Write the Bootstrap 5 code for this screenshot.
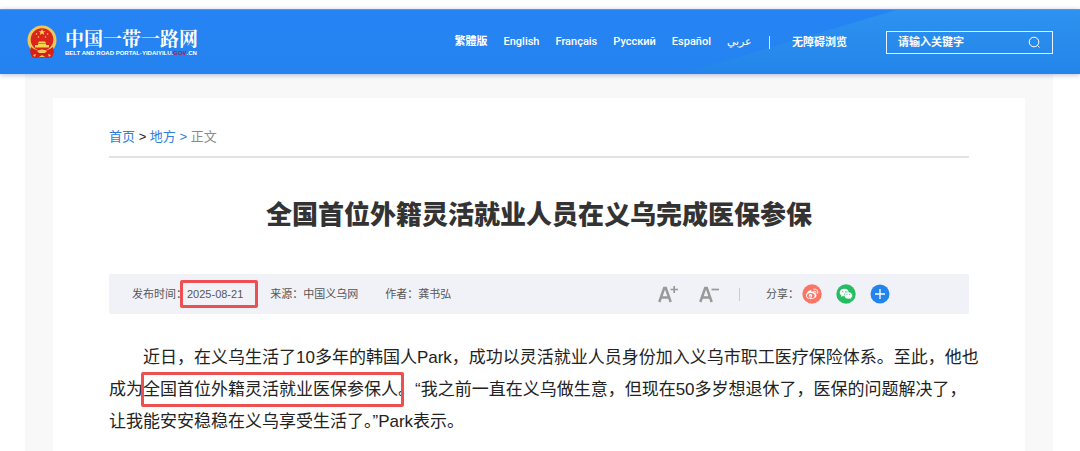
<!DOCTYPE html>
<html lang="zh-CN">
<head>
<meta charset="utf-8">
<meta name="viewport" content="width=device-width, initial-scale=1">
<title>全国首位外籍灵活就业人员在义乌完成医保参保</title>
<link href="https://cdn.jsdelivr.net/npm/bootstrap@5.3.0/dist/css/bootstrap.min.css" rel="stylesheet">
<style>
body{font-family:"Liberation Sans","Noto Sans CJK SC",sans-serif;background:#fff;color:#222}
a{text-decoration:none}
.site-head{margin-top:9px;height:65px;padding:0 27px;position:relative;z-index:1;border-top:1px solid #5f96d2;background:linear-gradient(#2583f4,#2583f0);box-shadow:0 1px 5px rgba(40,70,150,.35)}
.sheen{position:absolute;inset:0 0 0 auto;width:400px;height:100%;z-index:-1}
.brand-cn{font-family:"Noto Serif CJK SC","Noto Sans CJK SC",serif;font-size:19px;font-weight:700;line-height:22px}
.brand-en{font-size:6px;font-weight:700;line-height:8px;white-space:nowrap}
.brand-en b{color:#b3174f}
.langs{gap:16px;font-family:Roboto,"Noto Sans CJK TC",sans-serif;font-size:11px;font-weight:500;line-height:16px}
.langs a,.barrier{color:#fff;white-space:nowrap}
.barrier{font-size:11px;font-weight:700;line-height:16px}
.rule{width:1px;height:13px;background:#d6e9ff;margin:0 22px 0 17px}
.find{width:167px;height:23px;border:1px solid #e6f2ff;margin-left:39px;padding:0 11px}
.find input{font-size:11px;font-weight:700;line-height:16px;color:#fff;background:none;border:0;outline:0;padding:0;min-width:0}
.find input::placeholder{color:#fff;opacity:1}
.find button{background:none;border:0;padding:0;line-height:0}
.page-bg{background:#f8f8f8;margin:0 27px 0 25px;padding:24px 28px 0}
.article{background:#fff;padding:26px 56px 13px}
.crumbs{font-size:13px;line-height:26px;padding-bottom:6px;border-bottom:2px solid #e2e2e2;color:#222}
.crumbs a{color:#2f7de1}.crumbs .here{color:#8b8b8b}
h1{font-size:26px;font-weight:900;line-height:36px;color:#333;margin:39px 0 41px}
.meta-bar{background:#f1f2f8;min-height:40px;padding:0 79px 0 23px;font-size:11px;line-height:16px;color:#555;border-radius:2px}
.facts{gap:27px}
.tools button{background:none;border:0;padding:0;line-height:0}
.sizes{gap:21px}
.tick{width:1px;height:13px;background:#ccc;margin:0 26px 0 20px}
.share{gap:14px;margin-left:3px}
.story{font-size:17px;line-height:32px;text-indent:2em;margin:28px -12px 0 0;color:#222}
.boxed{position:relative}
.boxed::after{content:"";position:absolute;border:3px solid #ed5050;border-radius:2px}
.box-date::after{inset:-8px -15px -8px -7px}
.box-text::after{inset:-8px -6px -8px -2px}
</style>
</head>
<body>
<header class="site-head d-flex align-items-center">
  <svg class="sheen" viewBox="0 0 400 64" preserveAspectRatio="none" aria-hidden="true"><defs><linearGradient id="sh" x2="0" y2="1"><stop stop-color="#2d92f0"/><stop offset="1" stop-color="#2385e9"/></linearGradient></defs><path d="M216 0H400V64H0Q55 48 216 0" fill="url(#sh)"/></svg>
  <a href="#" class="d-flex align-items-center text-white">
    <svg width="30" height="34" viewBox="0 0 30 34" aria-hidden="true">
      <path d="M4 23h22l-1 9-5 1-5-2-5 2-5-1z" fill="#d81e18"/>
      <circle cx="15" cy="15" r="14.5" fill="#f1c65a"/><circle cx="15" cy="14.500" r="11.300" fill="#d9251c"/>
      <path d="M15 4l1 2.200h2.300l-1.800 1.500.7 2.300-2.200-1.400L12.800 10l.7-2.300-1.800-1.500H14z" fill="#f8d54e"/>
      <g fill="#f8d54e"><circle cx="9.500" cy="9" r=".8"/><circle cx="20.500" cy="9" r=".8"/><circle cx="11.500" cy="12" r=".8"/><circle cx="18.500" cy="12" r=".8"/><path d="M11 18l1-1.500h6l1 1.500zM11 18.500h8v1.500H22v2.500H8V20h3z"/></g>
      <path d="M4 22q5 4 11 4t11-4l1 5-2 5-4 1-2-1-4 1-4-1-2 1-4-1-2-5z" fill="#d81e18"/>
      <path d="M10 26q5-3 10 0l-2 2h-6zM6 30l3-1-1 3zM24 30l-3-1 1 3zM12 32l3-2 3 2z" fill="#f3cb5b"/>
    </svg>
    <span class="ms-2"><span class="brand-cn d-block">中国一带一路网</span><span class="brand-en d-block">BELT AND ROAD PORTAL·YIDAIYILU.<b>GOV</b>.CN</span></span>
  </a>
  <nav class="langs d-flex align-items-center ms-auto" aria-label="语言">
    <a href="#" lang="zh-TW" class="fw-bold">繁體版</a><a href="#">English</a><a href="#">Français</a><a href="#">Русский</a><a href="#">Español</a><a href="#" lang="ar" class="fw-normal">عربي</a>
  </nav>
  <span class="rule"></span>
  <a href="#" class="barrier">无障碍浏览</a>
  <form class="find d-flex align-items-center">
    <input type="text" class="flex-grow-1" aria-label="搜索" placeholder="请输入关键字">
    <button type="button" aria-label="搜索"><svg width="13" height="13" viewBox="0 0 13 13" fill="none" stroke="#fff"><circle cx="6" cy="6" r="4.800"/><path d="M9.500 9.500l2 2"/></svg></button>
  </form>
</header>
<main class="page-bg">
  <article class="article">
    <nav class="crumbs" aria-label="面包屑"><a href="#">首页</a> &gt; <a href="#">地方 &gt;</a> <span class="here">正文</span></nav>
    <h1 class="text-center">全国首位外籍灵活就业人员在义乌完成医保参保</h1>
    <div class="meta-bar d-flex align-items-center justify-content-between">
      <div class="facts d-flex"><span>发布时间：<span class="boxed box-date">2025-08-21</span></span><span>来源：中国义乌网</span><span>作者：龚书弘</span></div>
      <div class="tools d-flex align-items-center">
        <div class="sizes d-flex">
          <button type="button" aria-label="放大字号"><svg width="20" height="20" viewBox="0 0 20 20" fill="none" stroke="#999"><path d="M1.300 18L6.200 4h1.600L12.700 18M3.500 13.500h7" stroke-width="2.500"/><path d="M12.500 5.500h7.500M16.200 2v7" stroke-width="1.700"/></svg></button>
          <button type="button" aria-label="缩小字号"><svg width="20" height="20" viewBox="0 0 20 20" fill="none" stroke="#999"><path d="M1.300 18L6.200 4h1.600L12.700 18M3.500 13.500h7" stroke-width="2.500"/><path d="M12.500 5.500h7.500" stroke-width="1.700"/></svg></button>
        </div>
        <span class="tick"></span>
        <span>分享：</span>
        <div class="share d-flex">
          <button type="button" aria-label="微博"><svg width="20" height="20" viewBox="0 0 20 20"><circle cx="10" cy="10" r="9.700" fill="#fb7565"/><path d="M8.500 6.300c1 0 1.300.7 1.100 1.500 1.500-.6 3.200-.4 2.800 1.200 1.400.4 2.100 1.200 2.100 2.300 0 2.200-2.600 3.900-5.700 3.900S4 13.800 4 11.600c0-2.200 2.500-5.300 4.500-5.300z" fill="#fff"/><ellipse cx="8.800" cy="11.700" rx="3.800" ry="2.600" fill="#fb7565"/><circle cx="8.500" cy="11.900" r="1.800" fill="#fff"/><circle cx="8" cy="12.200" r=".7" fill="#fb7565"/><path d="M11.800 5.200c2.800-.5 4.600 1.500 3.900 4M12.200 7.100c1.300-.2 2.100.6 1.800 1.800" stroke="#fff" fill="none" stroke-linecap="round"/></svg></button>
          <button type="button" aria-label="微信"><svg width="20" height="20" viewBox="0 0 20 20"><circle cx="10" cy="10" r="9.700" fill="#24bd62"/><path d="M8.300 4.800c-2.600 0-4.600 1.700-4.600 3.800 0 1.200.7 2.200 1.700 2.900L5 13l1.800-.9c.5.1 1 .2 1.500.2 2.600 0 4.600-1.700 4.600-3.800s-2-3.700-4.600-3.700z" fill="#fff"/><path d="M12.400 7.900c-2.400 0-4.200 1.500-4.200 3.500s1.800 3.500 4.200 3.500c.5 0 .9-.1 1.300-.2l1.600.8-.4-1.400c1-.6 1.600-1.600 1.600-2.700 0-2-1.800-3.500-4.100-3.500z" fill="#fff" stroke="#24bd62" stroke-width=".5"/><g fill="#24bd62"><circle cx="6.800" cy="7.600" r=".6"/><circle cx="9.800" cy="7.600" r=".6"/><circle cx="11" cy="10.500" r=".5"/><circle cx="13.700" cy="10.500" r=".5"/></g></svg></button>
          <button type="button" aria-label="更多"><svg width="20" height="20" viewBox="0 0 20 20"><circle cx="10" cy="10" r="9.500" fill="#2583ee"/><path d="M5 10h10M10 5v10" stroke="#fff" stroke-width="1.300"/></svg></button>
        </div>
      </div>
    </div>
    <p class="story">近日，在义乌生活了10多年的韩国人Park，成功以灵活就业人员身份加入义乌市职工医疗保险体系。至此，他也成为<span class="boxed box-text">全国首位外籍灵活就业医保参保人</span>。“我之前一直在义乌做生意，但现在50多岁想退休了，医保的问题解决了，让我能安安稳稳在义乌享受生活了。”Park表示。</p>
  </article>
</main>
<script src="https://cdn.jsdelivr.net/npm/bootstrap@5.3.0/dist/js/bootstrap.bundle.min.js"></script>
</body>
</html>
